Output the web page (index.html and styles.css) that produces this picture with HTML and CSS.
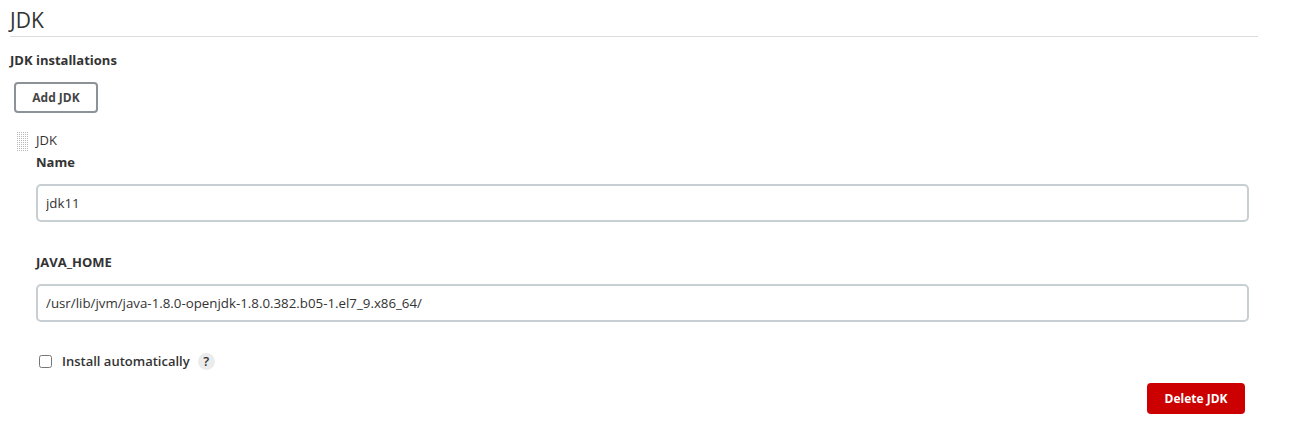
FILE: index.html
```html
<!DOCTYPE html>
<html lang="en">
<head>
<meta charset="utf-8">
<title>JDK</title>
<link rel="stylesheet" href="styles.css">
</head>
<body>
<section class="section">
  <h2 class="section-title">JDK</h2>
  <div class="group-label">JDK installations</div>
  <div class="add-row"><button class="btn btn-outline" type="button">Add JDK</button></div>
  <div class="repeated">
    <div class="repeated-head">
      <svg class="handle" width="11" height="19" viewBox="0 0 11 19" aria-hidden="true">
        <defs>
          <pattern id="dots" width="2" height="2" patternUnits="userSpaceOnUse">
            <rect x="0" y="0" width="1" height="1" fill="#b8b8b8"/>
          </pattern>
        </defs>
        <rect x="0" y="0" width="11" height="19" fill="url(#dots)"/>
      </svg>
      <span class="repeated-title">JDK</span>
    </div>
    <div class="repeated-body">
      <div class="field">
        <label class="field-label">Name</label>
        <input class="text-input" type="text" value="jdk11">
      </div>
      <div class="field">
        <label class="field-label">JAVA_HOME</label>
        <input class="text-input" type="text" value="/usr/lib/jvm/java-1.8.0-openjdk-1.8.0.382.b05-1.el7_9.x86_64/">
      </div>
      <div class="check-row">
        <input class="checkbox" type="checkbox">
        <span class="check-label">Install automatically</span>
        <span class="help">?</span>
      </div>
      <div class="delete-row">
        <button class="btn btn-danger" type="button">Delete JDK</button>
      </div>
    </div>
  </div>
</section>
</body>
</html>
```

FILE: styles.css
```css
* { box-sizing: border-box; }
html, body { margin: 0; padding: 0; background: #fff; }
body {
  font-family: "Open Sans", "Noto Sans", sans-serif;
  color: #333;
  font-size: 13px;
}
.section {
  width: 1258px;
  padding: 8px 0 0 10px;
}
.section-title {
  margin: 0;
  font-size: 21px;
  line-height: 24px;
  font-weight: 400;
  color: #333;
  padding-bottom: 4px;
  border-bottom: 1px solid #ddd;
}
.group-label {
  margin-top: 13px;
  font-size: 13px;
  line-height: 20px;
  font-weight: 700;
}
.add-row { margin-top: 12px; padding-left: 4px; }
.btn {
  font-family: inherit;
  font-weight: 700;
  font-size: 12px;
  border-radius: 4px;
  cursor: pointer;
}
.btn-outline {
  width: 84px;
  height: 31px;
  background: #fff;
  color: #444;
  border: 2px solid #8d9297;
}
.repeated { margin-top: 19px; }
.repeated-head {
  display: flex;
  align-items: flex-start;
  padding-left: 7px;
  height: 20px;
}
.handle { display: block; flex: none; }
.repeated-title {
  margin-left: 8px;
  font-size: 13px;
  line-height: 16px;
  color: #333;
}
.repeated-body { padding-left: 26px; width: 1239px; }
.field-label {
  display: block;
  font-weight: 700;
  font-size: 13px;
  line-height: 20px;
}
.text-input {
  display: block;
  width: 100%;
  height: 38px;
  margin-top: 12px;
  padding: 0 8px;
  border: 2px solid #c7cfd3;
  border-radius: 5px;
  font-family: inherit;
  font-size: 13.3px;
  color: #333;
  background: #fff;
  outline: none;
}
.field + .field { margin-top: 30px; }
.check-row {
  display: flex;
  align-items: center;
  margin-top: 30px;
  padding-left: 3px;
  height: 18px;
}
.checkbox {
  margin: 0;
  width: 13px;
  height: 13px;
}
.check-label {
  margin-left: 10px;
  font-weight: 600;
  font-size: 13px;
}
.help {
  margin-left: 8px;
  width: 17px;
  height: 17px;
  border-radius: 50%;
  background: #ebebeb;
  color: #333;
  font-size: 13px;
  font-weight: 600;
  display: flex;
  align-items: center;
  justify-content: center;
}
.delete-row {
  display: flex;
  justify-content: flex-end;
  padding-right: 4px;
  margin-top: 13px;
}
.btn-danger {
  width: 98px;
  height: 31px;
  background: #cc0000;
  color: #fff;
  border: none;
}
```
